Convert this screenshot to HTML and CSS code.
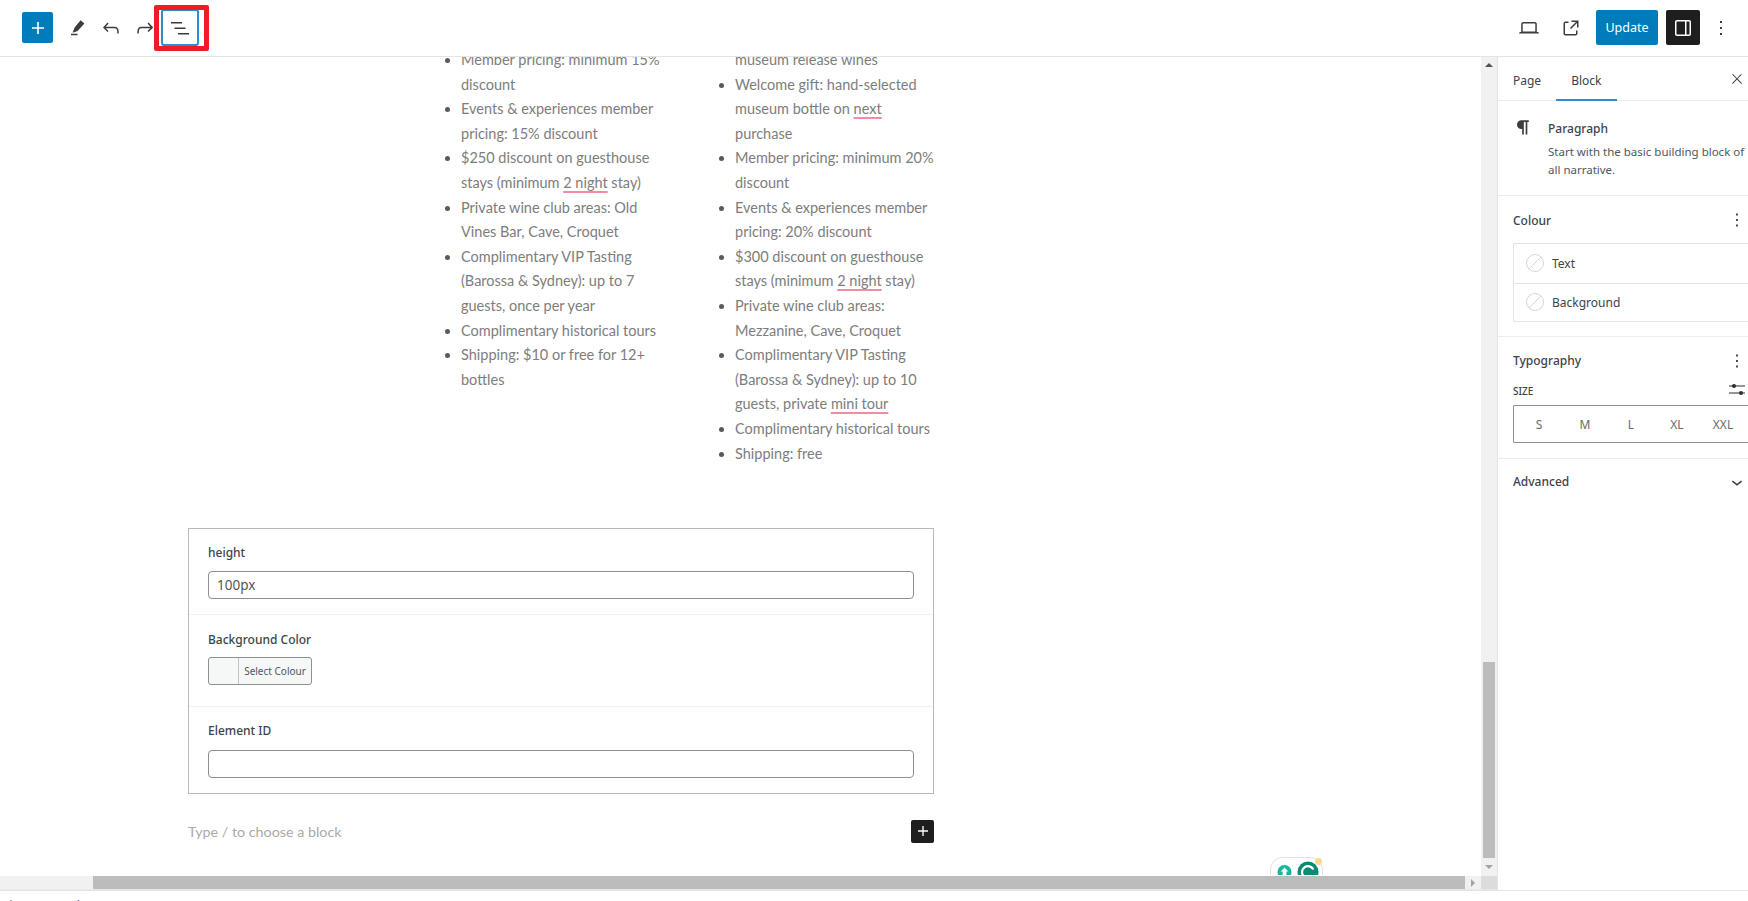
FILE: index.html
```html
<!DOCTYPE html>
<html lang="en">
<head>
<meta charset="utf-8">
<title>Edit page</title>
<link rel="stylesheet" href="styles.css">
</head>
<body>
<div class="app">
  <header class="topbar">
    <div class="tools">
      <button class="add-btn"><svg viewBox="0 0 24 24" class="ico"><path d="M18 11.2h-5.2V6h-1.6v5.2H6v1.6h5.2V18h1.6v-5.2H18z"/></svg></button>
      <button class="icon-btn first"><svg viewBox="0 0 24 24" class="ico"><path d="M15.6 4.2 19.4 7.4 12.6 15 7.6 16.8 9.6 11.6zM6 17.8h6.5v1.4H6z"/></svg></button>
      <button class="icon-btn"><svg viewBox="0 0 24 24" class="ico"><path d="M18.3 11.7c-.6-.6-1.4-.9-2.3-.9H6.7l2.9-3.3-1.1-1-4.5 5L8.5 16l1-1-2.7-2.7H16c.5 0 .9.2 1.3.5 1 1 1 3.4 1 4.5v.3h1.5v-.2c0-1.5 0-4.3-1.5-5.7z"/></svg></button>
      <button class="icon-btn"><svg viewBox="0 0 24 24" class="ico"><path d="M15.6 6.5l-1.1 1 2.9 3.3H8c-.9 0-1.7.3-2.3.9-1.4 1.5-1.4 4.2-1.4 5.6v.2h1.5v-.3c0-1.1 0-3.5 1-4.5.3-.3.7-.5 1.3-.5h9.2L14.5 15l1.1 1.1 4.6-4.6-4.6-5z"/></svg></button>
      <div class="list-wrap">
        <button class="list-btn"><svg viewBox="0 0 24 24" class="ico"><path d="M3 6h11v1.5H3V6zm3.5 5.5h11V13h-11v-1.5zM21 17H10v1.5h11V17z"/></svg></button>
        <span class="highlight"></span>
      </div>
    </div>
    <div class="actions">
      <button class="icon-btn wide"><svg viewBox="0 0 24 24" class="ico"><path d="M20.5 16h-.7V8c0-1.1-.9-2-2-2H6.2c-1.1 0-2 .9-2 2v8h-.7c-.8 0-1.5.7-1.5 1.5h20c0-.8-.7-1.5-1.5-1.5zM5.7 8c0-.3.2-.5.5-.5h11.6c.3 0 .5.2.5.5v7.6H5.7V8z"/></svg></button>
      <button class="icon-btn wide"><svg viewBox="0 0 24 24" class="ico"><path d="M19.5 4.5h-7V6h4.44l-5.97 5.97 1.06 1.06L18 7.06v4.44h1.5v-7Zm-13 1a2 2 0 0 0-2 2v10a2 2 0 0 0 2 2h10a2 2 0 0 0 2-2v-3H17v3a.5.5 0 0 1-.5.5h-10a.5.5 0 0 1-.5-.5v-10a.5.5 0 0 1 .5-.5h3V5.5h-3Z"/></svg></button>
      <button class="update-btn">Update</button>
      <button class="drawer-btn"><svg viewBox="0 0 24 24" class="ico"><path d="M18 4H6c-1.1 0-2 .9-2 2v12c0 1.1.9 2 2 2h12c1.1 0 2-.9 2-2V6c0-1.1-.9-2-2-2zm-4 14.5H6c-.3 0-.5-.2-.5-.5V6c0-.3.2-.5.5-.5h8v13zm4.5-.5c0 .3-.2.5-.5.5h-2.5v-13H18c.3 0 .5.2.5.5v12z"/></svg></button>
      <button class="more-btn"><svg viewBox="0 0 24 24" class="ico"><path d="M13 19h-2v-2h2v2zm0-6h-2v-2h2v2zm0-6h-2V5h2v2z"/></svg></button>
    </div>
  </header>

  <div class="workspace">
    <div class="editor">
      <div class="editor-row">
        <main class="canvas">
          <div class="post">
            <div class="columns">
              <ul class="list">
                <li>Member pricing: minimum 15% discount</li>
                <li>Events &amp; experiences member pricing: 15% discount</li>
                <li>$250 discount on guesthouse stays (minimum <span class="flag">2 night</span> stay)</li>
                <li>Private wine club areas: Old Vines Bar, Cave, Croquet</li>
                <li>Complimentary VIP Tasting (Barossa &amp; Sydney): up to 7 guests, once per year</li>
                <li>Complimentary historical tours</li>
                <li>Shipping: $10 or free for 12+ bottles</li>
              </ul>
              <ul class="list">
                <li class="continued">museum release wines</li>
                <li>Welcome gift: hand-selected museum bottle on <span class="flag">next</span> purchase</li>
                <li>Member pricing: minimum 20% discount</li>
                <li>Events &amp; experiences member pricing: 20% discount</li>
                <li>$300 discount on guesthouse stays (minimum <span class="flag">2 night</span> stay)</li>
                <li>Private wine club areas: Mezzanine, Cave, Croquet</li>
                <li>Complimentary VIP Tasting (Barossa &amp; Sydney): up to 10 guests, private <span class="flag">mini tour</span></li>
                <li>Complimentary historical tours</li>
                <li>Shipping: free</li>
              </ul>
            </div>
            <section class="form">
              <div class="field field-a">
                <label class="field-label">height</label>
                <input class="text-input" type="text" value="100px">
              </div>
              <div class="field field-b">
                <label class="field-label">Background Color</label>
                <button class="colour-btn"><span class="swatch"></span><span class="colour-text">Select Colour</span></button>
              </div>
              <div class="field field-c">
                <label class="field-label">Element ID</label>
                <input class="text-input tall-gap" type="text">
              </div>
            </section>
            <div class="appender">
              <span class="placeholder">Type / to choose a block</span>
              <button class="inline-add"><svg viewBox="0 0 24 24" class="ico"><path d="M18 11.2h-5.2V6h-1.6v5.2H6v1.6h5.2V18h1.6v-5.2H18z"/></svg></button>
            </div>
          </div>
          <div class="grammarly">
            <svg viewBox="0 0 54 30" width="54" height="30">
              <rect x="0.5" y="0.5" width="52" height="29" rx="12" fill="#fff" stroke="#dfe1e6"/>
              <circle cx="14.5" cy="15" r="7" fill="#15b79a"/>
              <path d="M14.5 10.5 18.3 14.6H16.4V19H12.6V14.6H10.7Z" fill="#fff"/>
              <circle cx="38" cy="15" r="10.5" fill="#0f8a72"/>
              <path d="M43 18.5A6 6 0 1 1 43.4 12.5" fill="none" stroke="#fff" stroke-width="2.2"/>
              <circle cx="48.5" cy="4.5" r="3.5" fill="#f8d98f"/>
            </svg>
          </div>
        </main>
        <div class="vscroll">
          <span class="arrow-up"></span>
          <span class="v-space"></span>
          <span class="v-thumb"></span>
          <span class="arrow-down"></span>
        </div>
      </div>
      <div class="hscroll">
        <span class="h-space"></span>
        <span class="h-thumb"></span>
        <span class="arrow-right"></span>
        <span class="corner"></span>
      </div>
    </div>

    <aside class="sidebar">
      <div class="tabs">
        <span class="tab">Page</span>
        <span class="tab active">Block</span>
        <svg viewBox="0 0 24 24" class="ico close"><path d="M13 11.8l6.1-6.3-1-1-6.1 6.2-6.1-6.2-1 1 6.1 6.3-6.5 6.7 1 1 6.5-6.6 6.5 6.6 1-1z"/></svg>
      </div>
      <div class="block-card">
        <svg viewBox="0 0 24 24" class="ico pilcrow"><path d="M19 4H10a5.2 5.2 0 0 0 0 10.4h1V21h2V6h2.2v15h2V6H19z"/></svg>
        <div class="block-info">
          <div class="block-title">Paragraph</div>
          <p class="block-desc">Start with the basic building block of all narrative.</p>
        </div>
      </div>
      <section class="panel panel-colour">
        <div class="panel-head"><h2 class="panel-title">Colour</h2><svg viewBox="0 0 24 24" class="ico dots"><path d="M13 19h-2v-2h2v2zm0-6h-2v-2h2v2zm0-6h-2V5h2v2z"/></svg></div>
        <div class="colour-list">
          <div class="colour-item"><span class="no-colour"></span>Text</div>
          <div class="colour-item"><span class="no-colour"></span>Background</div>
        </div>
      </section>
      <section class="panel panel-type">
        <div class="panel-head"><h2 class="panel-title">Typography</h2><svg viewBox="0 0 24 24" class="ico dots"><path d="M13 19h-2v-2h2v2zm0-6h-2v-2h2v2zm0-6h-2V5h2v2z"/></svg></div>
        <div class="size-head">
          <span class="size-label">SIZE</span>
          <svg viewBox="0 0 16 12" width="16" height="12" class="sliders"><path d="M0 2.5h16v1H0zM0 9.5h16v1H0z"/><circle cx="5" cy="3" r="2"/><circle cx="12" cy="10" r="2"/></svg>
        </div>
        <div class="sizes"><span>S</span><span>M</span><span>L</span><span>XL</span><span>XXL</span></div>
      </section>
      <section class="panel-adv">
        <h2 class="panel-title">Advanced</h2>
        <svg viewBox="0 0 24 24" class="ico chevron"><path d="M17.5 11.6L12 16l-5.5-4.4.9-1.2L12 14l4.5-3.6 1 1.2z"/></svg>
      </section>
    </aside>
  </div>

  <footer class="footer"><span class="crumb-arrow"></span><span class="crumb">Paragraph</span></footer>
</div>
</body>
</html>
```

FILE: styles.css
```css
* { box-sizing: border-box; }
html, body { margin: 0; height: 100%; overflow: hidden; background: #fff; }
body { font-family: "Noto Sans", sans-serif; color: #3c434a; }
button { border: 0; padding: 0; background: none; font: inherit; display: flex; align-items: center; justify-content: center; }
.ico { width: 24px; height: 24px; fill: #3c3c3c; display: block; flex: none; }

.app { width: 1748px; height: 901px; display: flex; flex-direction: column; overflow: hidden; }

/* top bar */
.topbar { height: 57px; flex: none; display: flex; justify-content: space-between; align-items: center; border-bottom: 1px solid #e4e4e4; padding: 0 15px 1px 22px; }
.tools, .actions { display: flex; align-items: center; }
.add-btn { width: 31px; height: 31px; background: #007cba; border-radius: 2px; }
.add-btn .ico { fill: #fff; }
.icon-btn { width: 34px; height: 36px; }
.icon-btn.first { margin-left: 7px; }
.icon-btn.wide { width: 42px; }
.list-wrap { position: relative; margin-left: -1px; }
.list-btn { width: 38px; height: 37px; border: 2px solid #2a8fca; border-radius: 3px; }
.highlight { position: absolute; left: -7px; top: -4px; width: 55px; height: 46px; border: 5px solid #ee1c25; border-radius: 2px; pointer-events: none; }
.update-btn { width: 62px; height: 35px; background: #007cba; color: #fff; border-radius: 2px; font-size: 12.5px; margin-left: 4px; }
.drawer-btn { width: 34px; height: 35px; background: #1e1e1e; border-radius: 2px; margin-left: 8px; }
.drawer-btn .ico { fill: #fff; }
.more-btn { width: 24px; height: 36px; margin-left: 9px; }

/* layout */
.workspace { flex: 1; min-height: 0; display: flex; }
.editor { width: 1497px; flex: none; display: flex; flex-direction: column; }
.editor-row { flex: 1; min-height: 0; display: flex; }
.canvas { position: relative; width: 1481px; flex: none; overflow: hidden; }

/* content */
.post { width: 746px; margin-left: 188px; margin-top: -9px; }
.columns { display: flex; gap: 35px; margin-left: 233px; height: 480px; }
.list { width: 239px; margin: 0; padding: 0 0 0 40px; list-style: disc; flex: none; font-family: "Lato", sans-serif; font-size: 14.5px; line-height: 24.6px; color: #7d7d7d; }
.list li::marker { color: #5a5a5a; }
.list .continued { list-style: none; }
.flag { text-decoration: underline; text-decoration-color: #f48ba4; text-decoration-thickness: 2px; text-underline-offset: 3px; }

.form { border: 1px solid #b9b9b9; height: 266px; display: flex; flex-direction: column; }
.field { padding: 0 19px; border-bottom: 1px solid #f2f2f2; }
.field:last-child { border-bottom: 0; }
.field-a { height: 86px; padding-top: 15px; }
.field-b { height: 92px; padding-top: 16px; }
.field-c { flex: 1; padding-top: 15px; }
.field-label { display: block; height: 18px; line-height: 18px; font-size: 12px; font-weight: 500; color: #3c434a; }
.text-input { display: block; width: 100%; height: 28px; margin-top: 9px; border: 1px solid #8c8f94; border-radius: 4px; padding: 0 8px; font: 13.5px "Noto Sans", sans-serif; color: #50575e; background: #fff; }
.tall-gap { margin-top: 10px; }
.colour-btn { width: 104px; height: 28px; margin-top: 8px; border: 1px solid #8c8f94; border-radius: 3px; background: #f6f7f7; justify-content: flex-start; }
.swatch { width: 30px; height: 100%; border-right: 1px solid #c3c4c7; }
.colour-text { flex: 1; text-align: center; font-size: 10px; color: #50575e; }

.appender { display: flex; justify-content: space-between; align-items: center; margin-top: 25px; height: 24px; }
.placeholder { font-family: "Lato", sans-serif; font-size: 14.3px; color: #aaa; }
.inline-add { width: 23px; height: 23px; background: #1e1e1e; border-radius: 2px; }
.inline-add .ico { fill: #fff; width: 20px; height: 20px; }

.grammarly { position: absolute; left: 1270px; top: 800px; height: 18px; width: 54px; overflow: hidden; }
.grammarly svg { display: block; }

/* scrollbars */
.vscroll { flex: 1; background: #f1f1f1; display: flex; flex-direction: column; align-items: center; padding-top: 6px; }
.arrow-up { width: 0; height: 0; border: 4px solid transparent; border-top: 0; border-bottom: 4px solid #505050; }
.v-space { flex: 1; }
.v-thumb { width: 12px; height: 196px; background: #bcbcbc; flex: none; }
.arrow-down { width: 0; height: 0; border: 4px solid transparent; border-bottom: 0; border-top: 4px solid #a3a3a3; margin: 7px 0; }

.hscroll { height: 14px; flex: none; background: #f1f1f1; display: flex; align-items: stretch; border-bottom: 1px solid #e8e8e8; }
.h-space { width: 93px; }
.h-thumb { flex: 1; background: #bcbcbc; }
.arrow-right { width: 16px; display: flex; align-items: center; justify-content: center; }
.arrow-right::before { content: ""; border: 4px solid transparent; border-right: 0; border-left: 4px solid #a3a3a3; }
.corner { width: 16px; background: #dcdcdc; }

/* sidebar */
.sidebar { flex: 1; min-width: 0; border-left: 1px solid #e4e4e4; overflow: hidden; }
.tabs { height: 44px; display: flex; align-items: stretch; border-bottom: 1px solid #ececec; padding-left: 3px; }
.tab { font-size: 12px; line-height: 47px; padding: 0 12px; color: #3c434a; height: 44px; }
.tab.active { padding: 0 15px; margin-left: 3px; border-bottom: 2px solid #2a8fca; width: 61px; }
.close { margin-left: auto; margin-right: 3px; width: 16px; height: 16px; margin-top: 14px; }
.block-card { height: 95px; display: flex; padding: 19px 0 0 15px; border-bottom: 1px solid #ececec; }
.pilcrow { width: 20px; height: 20px; margin-top: -3px; }
.block-info { margin-left: 15px; width: 210px; flex: none; }
.block-title { font-size: 12px; line-height: 18px; font-weight: 500; color: #3c434a; }
.block-desc { margin: 5px 0 0; font-size: 11.5px; line-height: 17.5px; color: #50575e; }
.panel { border-bottom: 1px solid #ececec; padding: 0 0 0 15px; }
.panel-colour { height: 141px; }
.panel-type { height: 122px; }
.panel-head { display: flex; align-items: center; justify-content: space-between; height: 47px; }
.panel-title { margin: 0; font-size: 12px; font-weight: 500; color: #3c434a; }
.panel-colour .panel-title { position: relative; top: 1px; }
.dots { width: 22px; height: 22px; }
.colour-list { border: 1px solid #e4e4e4; border-right: 0; width: 260px; border-radius: 2px; }
.colour-item { height: 38.5px; display: flex; align-items: center; padding-left: 12px; font-size: 12px; color: #3c434a; }
.colour-item + .colour-item { border-top: 1px solid #e4e4e4; }
.no-colour { width: 18px; height: 18px; margin-right: 8px; border-radius: 50%; border: 1px solid #d6d6d6; background: linear-gradient(135deg, transparent 47%, #d6d6d6 47%, #d6d6d6 53%, transparent 53%); }
.size-head { display: flex; align-items: center; justify-content: space-between; height: 15px; margin-top: -1px; }
.size-label { font-size: 10px; font-weight: 500; color: #3c434a; }
.sliders { fill: #2c2c2c; margin-right: 3px; margin-top: -4px; }
.sizes { display: flex; width: 260px; height: 38px; margin-top: 7px; border: 1px solid #8c8f94; border-right: 0; border-radius: 2px 0 0 2px; align-items: center; padding-left: 2px; font-size: 12px; color: #6b6b6b; }
.sizes span { width: 46px; text-align: center; flex: none; }
.panel-adv { height: 44px; display: flex; align-items: center; justify-content: space-between; padding-left: 15px; }
.chevron { width: 22px; height: 22px; position: relative; top: 1px; }

/* footer */
.footer { height: 11px; flex: none; overflow: hidden; display: flex; padding: 7px 0 0 7px; font-size: 12px; line-height: 16px; color: #3c434a; border-top: 1px solid #e4e4e4; }
.crumb-arrow { width: 0; height: 0; border: 4px solid transparent; border-top: 0; border-bottom: 4px solid #555; margin-top: 2px; }
.crumb { margin-left: 10px; }
```
